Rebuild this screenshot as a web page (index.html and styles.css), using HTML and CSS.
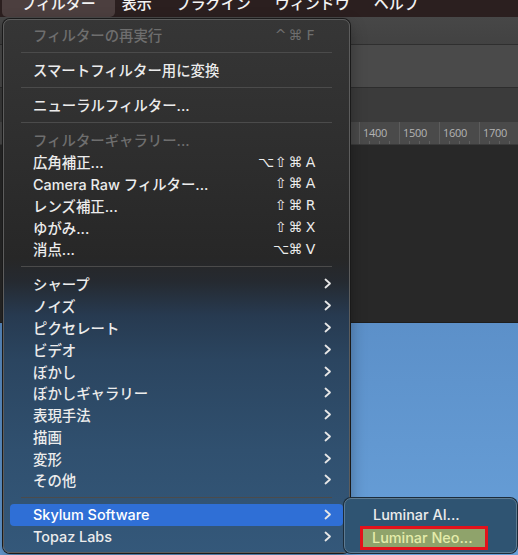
FILE: index.html
```html
<!DOCTYPE html>
<html lang="ja">
<head>
<meta charset="utf-8">
<link rel="stylesheet" href="styles.css">
</head>
<body>
<div class="screen">
  <div class="menubar">
    <div class="mtitle active">フィルター</div>
    <div class="mtitle">表示</div>
    <div class="mtitle">プラグイン</div>
    <div class="mtitle">ウィンドウ</div>
    <div class="mtitle">ヘルプ</div>
  </div>
  <div class="app">
    <div class="bar1"></div>
    <div class="bar2"></div>
    <div class="bar3"></div>
    <div class="ruler">
      <div class="cell"></div><div class="cell"></div><div class="cell"></div><div class="cell"></div><div class="cell"></div><div class="cell"></div><div class="cell"></div><div class="cell"></div><div class="cell"></div><div class="cell">1400</div><div class="cell">1500</div><div class="cell">1600</div><div class="cell">1700</div><div class="cell">1800</div>
    </div>
    <div class="canvas"></div>
    <div class="photo"></div>
  </div>

  <div class="menu">
    <div class="item disabled"><span class="label">フィルターの再実行</span><span class="keys"><i>^</i><i>⌘</i><i>F</i></span></div>
    <div class="sep"></div>
    <div class="item"><span class="label">スマートフィルター用に変換</span></div>
    <div class="sep"></div>
    <div class="item"><span class="label">ニューラルフィルター...</span></div>
    <div class="sep"></div>
    <div class="item disabled"><span class="label">フィルターギャラリー...</span></div>
    <div class="item"><span class="label">広角補正...</span><span class="keys"><i>⌥</i><i>⇧</i><i>⌘</i><i>A</i></span></div>
    <div class="item"><span class="label">Camera Raw フィルター...</span><span class="keys"><i>⇧</i><i>⌘</i><i>A</i></span></div>
    <div class="item"><span class="label">レンズ補正...</span><span class="keys"><i>⇧</i><i>⌘</i><i>R</i></span></div>
    <div class="item"><span class="label">ゆがみ...</span><span class="keys"><i>⇧</i><i>⌘</i><i>X</i></span></div>
    <div class="item"><span class="label">消点...</span><span class="keys"><i>⌥</i><i>⌘</i><i>V</i></span></div>
    <div class="sep"></div>
    <div class="item sub"><span class="label">シャープ</span><svg class="chev" viewBox="0 0 8 11"><polyline points="1.5,1.5 6,5.5 1.5,9.5"/></svg></div>
    <div class="item sub"><span class="label">ノイズ</span><svg class="chev" viewBox="0 0 8 11"><polyline points="1.5,1.5 6,5.5 1.5,9.5"/></svg></div>
    <div class="item sub"><span class="label">ピクセレート</span><svg class="chev" viewBox="0 0 8 11"><polyline points="1.5,1.5 6,5.5 1.5,9.5"/></svg></div>
    <div class="item sub"><span class="label">ビデオ</span><svg class="chev" viewBox="0 0 8 11"><polyline points="1.5,1.5 6,5.5 1.5,9.5"/></svg></div>
    <div class="item sub"><span class="label">ぼかし</span><svg class="chev" viewBox="0 0 8 11"><polyline points="1.5,1.5 6,5.5 1.5,9.5"/></svg></div>
    <div class="item sub"><span class="label">ぼかしギャラリー</span><svg class="chev" viewBox="0 0 8 11"><polyline points="1.5,1.5 6,5.5 1.5,9.5"/></svg></div>
    <div class="item sub"><span class="label">表現手法</span><svg class="chev" viewBox="0 0 8 11"><polyline points="1.5,1.5 6,5.5 1.5,9.5"/></svg></div>
    <div class="item sub"><span class="label">描画</span><svg class="chev" viewBox="0 0 8 11"><polyline points="1.5,1.5 6,5.5 1.5,9.5"/></svg></div>
    <div class="item sub"><span class="label">変形</span><svg class="chev" viewBox="0 0 8 11"><polyline points="1.5,1.5 6,5.5 1.5,9.5"/></svg></div>
    <div class="item sub"><span class="label">その他</span><svg class="chev" viewBox="0 0 8 11"><polyline points="1.5,1.5 6,5.5 1.5,9.5"/></svg></div>
    <div class="sep"></div>
    <div class="item sub selected"><span class="label">Skylum Software</span><svg class="chev" viewBox="0 0 8 11"><polyline points="1.5,1.5 6,5.5 1.5,9.5"/></svg></div>
    <div class="item sub"><span class="label">Topaz Labs</span><svg class="chev" viewBox="0 0 8 11"><polyline points="1.5,1.5 6,5.5 1.5,9.5"/></svg></div>
  </div>

  <div class="submenu">
    <div class="sitem">Luminar AI...</div>
    <div class="sitem neo"><span class="neo-text">Luminar Neo...</span></div>
  </div>
</div>
</body>
</html>
```

FILE: styles.css
```css
* { box-sizing: border-box; }
html, body { margin: 0; padding: 0; }
body {
  width: 518px;
  height: 555px;
  overflow: hidden;
  background: #3a3a3a;
  font-family: "Inter", "Noto Sans CJK JP", sans-serif;
}
.screen {
  position: relative;
  width: 518px;
  height: 555px;
  overflow: hidden;
}

/* menubar */
.menubar {
  height: 17px;
  background: #2b1f1f;
  display: flex;
  overflow: hidden;
  color: #f2f2f2;
  font-size: 15px;
  font-weight: 500;
}
.mtitle {
  line-height: 14px;
  margin-top: -3px;
  height: 20px;
  margin-right: 24px;
  white-space: nowrap;
}
.mtitle.active {
  margin-left: 2px;
  margin-right: 7px;
  padding: 0 19px;
  background: #4c3f3f;
  border-radius: 0 0 5px 5px;
}

/* application background */
.app {
  display: flex;
  flex-direction: column;
}
.bar1 {
  height: 28px;
  background: linear-gradient(#474747, #424242);
  border-bottom: 1px solid #2f2f2f;
}
.bar2 {
  height: 43px;
  background: #4a4a4a;
  border-bottom: 1px solid #2d2d2d;
}
.bar3 {
  height: 34px;
  background: #3b3b3b;
}
.ruler {
  height: 23px;
  background: #4a4a4a;
  display: flex;
  margin-left: -1px;
  border-bottom: 1px solid #3a3a3a;
}
.cell {
  flex: 0 0 40px;
  height: 100%;
  border-left: 1px solid #5c5c5c;
  padding: 5px 0 0 3px;
  font-size: 11px;
  line-height: 12px;
  color: #b4b4b4;
  font-family: "Open Sans", "DejaVu Sans", sans-serif;
  letter-spacing: -0.3px;
  background-image: repeating-linear-gradient(to right, transparent 0 9px, #606060 9px 10px);
  background-size: 100% 3px;
  background-position: 0 100%;
  background-repeat: no-repeat;
}
.canvas {
  height: 178px;
  background: #282828;
  border-bottom: 1px solid #1e1e1e;
}
.photo {
  height: 240px;
  background: linear-gradient(#5c90c9, #68a0d9);
}

/* main menu */
.menu {
  position: absolute;
  left: 3px;
  top: 19px;
  width: 347px;
  height: 534px;
  padding: 4px 0;
  border: 1px solid #5d5d5d;
  border-radius: 7px;
  box-shadow: 0 0 0 1px #1a1a1a, 0 6px 16px rgba(0,0,0,0.35);
  background: linear-gradient(to bottom,
    #363636 0px, #303030 100px, #272727 238px, #252a31 262px,
    #273a50 295px, #2b4560 340px, #30506f 430px, #34587a 534px);
  color: #ececec;
  font-size: 14.4px;
  font-weight: 500;
}
.item {
  height: 21.8px;
  margin: 0 6px;
  padding: 0 11px 0 23px;
  display: flex;
  align-items: center;
  border-radius: 4px;
  white-space: nowrap;
}
.item .label { flex: 1; }
.item.disabled { color: #6e6e6e; }
.item.selected { background: #2f6fd6; color: #fff; }
.keys {
  display: flex;
  margin-right: 14px;
  font-family: "DejaVu Sans", sans-serif;
  font-size: 14px;
  font-weight: 400;
}
.keys i {
  font-style: normal;
  width: 15px;
  text-align: center;
}
.chev {
  width: 8px;
  height: 11px;
  fill: none;
  stroke: #e6e6e6;
  stroke-width: 1.8;
  stroke-linecap: round;
  stroke-linejoin: round;
}
.sep {
  height: 1px;
  margin: 6px 17px 6.2px;
  background: #4b4b4b;
}
.menu .sep:last-of-type { background: #4a5f75; }

/* submenu */
.submenu {
  position: absolute;
  left: 344px;
  top: 498px;
  width: 173px;
  height: 55px;
  padding: 5px 6px;
  border: 1px solid #5e7c93;
  border-radius: 7px;
  background: #2f5472;
  box-shadow: 0 0 0 1px #1c2c3a;
  color: #ececec;
  font-size: 14.4px;
  font-weight: 500;
}
.sitem {
  height: 21.8px;
  line-height: 21.8px;
  padding-left: 22px;
  white-space: nowrap;
}
.sitem.neo {
  padding-left: 9px;
  margin-left: 9px;
  margin-right: 22px;
  border: 3px solid #e3121b;
  line-height: 18px;
  height: 24px;
  background: #8fa36b;
}
.neo-text { color: #e4ecaa; }
```
